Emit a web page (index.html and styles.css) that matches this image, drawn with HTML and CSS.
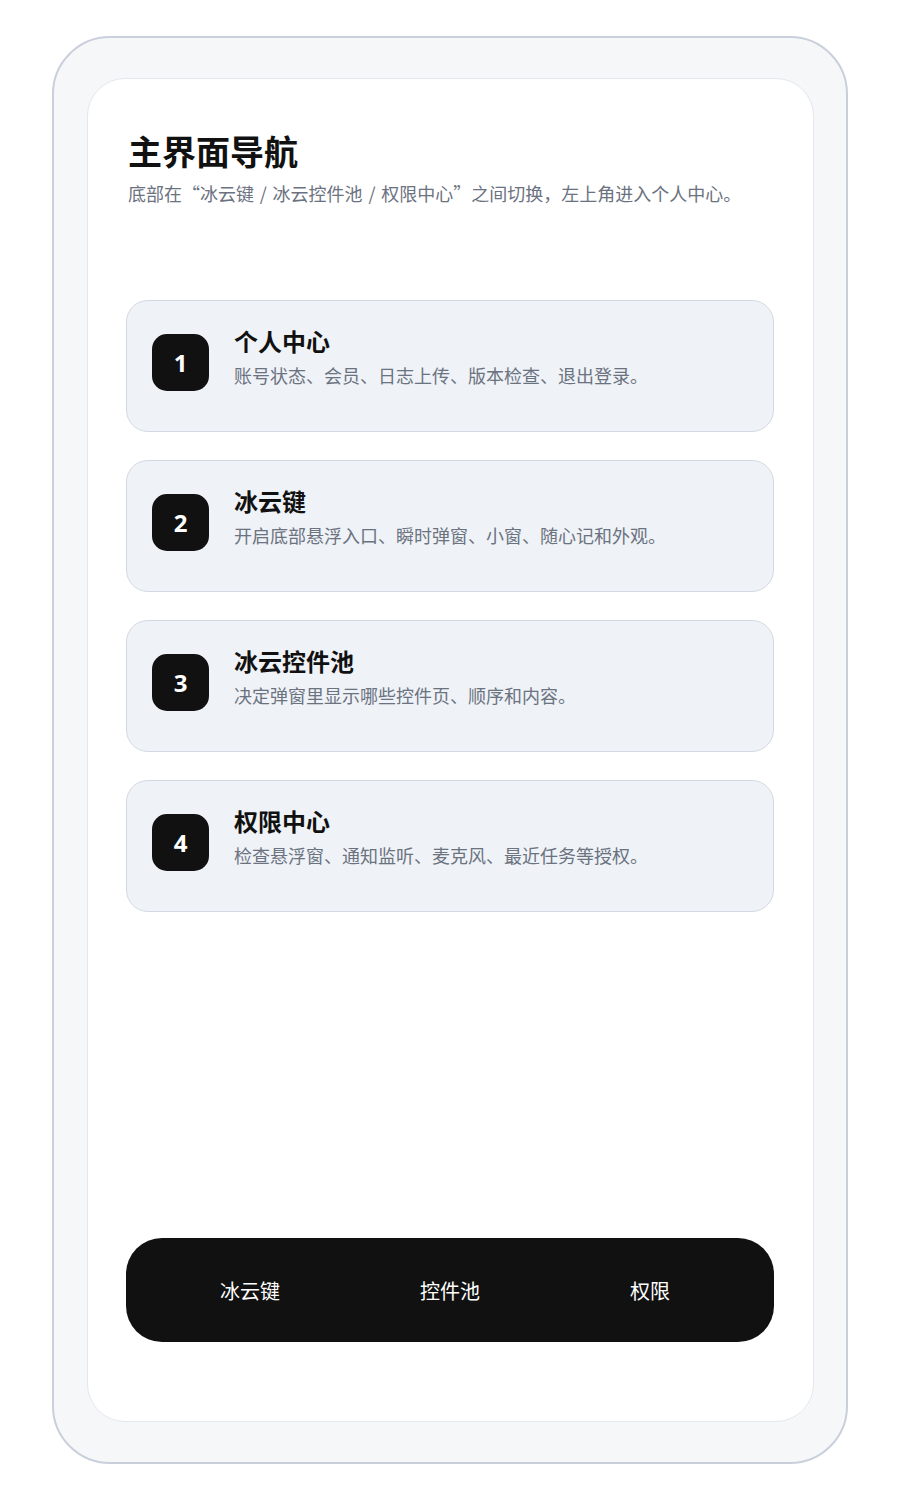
FILE: index.html
```html
<!DOCTYPE html>
<html lang="zh-CN">
<head>
<meta charset="utf-8">
<title>主界面导航</title>
<link rel="stylesheet" href="styles.css">
</head>
<body>
<div class="frame">
  <div class="screen">
    <header class="head">
      <h1 class="title">主界面导航</h1>
      <p class="subtitle">底部在“冰云键 / 冰云控件池 / 权限中心”之间切换，左上角进入个人中心。</p>
    </header>
    <div class="cards">
      <div class="card">
        <div class="badge">1</div>
        <div class="info">
          <div class="card-title">个人中心</div>
          <div class="card-desc">账号状态、会员、日志上传、版本检查、退出登录。</div>
        </div>
      </div>
      <div class="card">
        <div class="badge">2</div>
        <div class="info">
          <div class="card-title">冰云键</div>
          <div class="card-desc">开启底部悬浮入口、瞬时弹窗、小窗、随心记和外观。</div>
        </div>
      </div>
      <div class="card">
        <div class="badge">3</div>
        <div class="info">
          <div class="card-title">冰云控件池</div>
          <div class="card-desc">决定弹窗里显示哪些控件页、顺序和内容。</div>
        </div>
      </div>
      <div class="card">
        <div class="badge">4</div>
        <div class="info">
          <div class="card-title">权限中心</div>
          <div class="card-desc">检查悬浮窗、通知监听、麦克风、最近任务等授权。</div>
        </div>
      </div>
    </div>
    <nav class="tabbar">
      <div class="tab">冰云键</div>
      <div class="tab">控件池</div>
      <div class="tab">权限</div>
    </nav>
  </div>
</div>
</body>
</html>
```
FILE: styles.css
```css
* { box-sizing: border-box; }
html, body { margin: 0; padding: 0; background: #ffffff; }
body {
  font-family: "Noto Sans CJK SC", "Noto Sans", sans-serif;
  padding: 36px 52px;
}
.frame {
  width: 796px;
  height: 1428px;
  border: 2px solid #c9d0db;
  border-radius: 58px;
  background: #f6f7f9;
  padding: 40px 32px 40px 33px;
}
.screen {
  height: 100%;
  background: #ffffff;
  border: 1px solid #e4e7ed;
  border-radius: 38px;
  padding: 50px 39px 79px 38px;
  display: flex;
  flex-direction: column;
}
.head { padding-left: 2px; }
.title {
  margin: 0;
  font-size: 34px;
  line-height: 1.3;
  font-weight: 700;
  color: #111111;
}
.subtitle {
  margin: 7px 0 0;
  font-size: 18px;
  line-height: 1.5;
  color: #6b7280;
  word-spacing: 1.75px;
}
.cards {
  margin-top: 93px;
  display: flex;
  flex-direction: column;
  gap: 28px;
}
.card {
  height: 132px;
  background: #eff2f7;
  border: 1.5px solid #d3d9e3;
  border-radius: 22px;
  padding: 0 25px 8px;
  display: flex;
  align-items: center;
  gap: 25px;
}
.badge {
  width: 57px;
  height: 57px;
  flex: none;
  border-radius: 15px;
  background: #111111;
  color: #ffffff;
  font-family: "Open Sans", "Noto Sans", sans-serif;
  font-weight: 700;
  font-size: 24px;
  display: flex;
  align-items: center;
  justify-content: center;
}
.info {
  display: flex;
  flex-direction: column;
  gap: 4px;
  padding-bottom: 10px;
}
.card-title {
  font-size: 24px;
  line-height: 1.35;
  font-weight: 700;
  color: #111111;
}
.card-desc {
  font-size: 18px;
  line-height: 1.5;
  color: #6b7280;
}
.tabbar {
  margin-top: auto;
  height: 104px;
  background: #111111;
  border-radius: 36px;
  padding: 0 24px;
  display: grid;
  grid-template-columns: 1fr 1fr 1fr;
  align-items: center;
}
.tab {
  text-align: center;
  color: #ffffff;
  font-size: 20px;
  line-height: 1.4;
  padding-top: 2px;
}
```
